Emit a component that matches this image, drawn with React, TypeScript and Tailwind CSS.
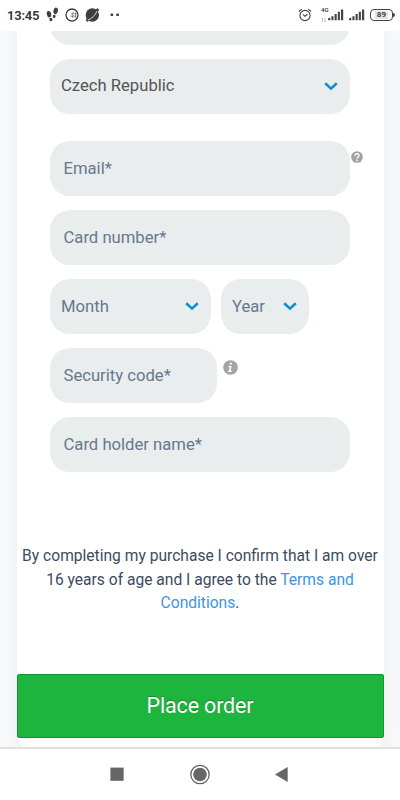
import type { ReactNode } from 'react';
import clsx from 'clsx';

function Chevron() {
    return (
        <svg width="14" height="9" viewBox="0 0 14 9" className="shrink-0" fill="none">
            <path d="M1.2 1.3 7 6.6l5.8-5.3" stroke="#0790d2" strokeWidth="2.6" />
        </svg>
    );
}

function Select({ value, className }: { value: string; className?: string }) {
    return (
        <button
            className={clsx(
                'flex h-[55px] items-center justify-between rounded-[20px] bg-[#e9eded] pr-[12.5px] pl-[11px] text-left',
                className
            )}>
            <span className="pt-px">{value}</span>
            <Chevron />
        </button>
    );
}

function Input({ label, className }: { label: string; className?: string }) {
    return (
        <input
            aria-label={label}
            placeholder={label}
            className={clsx(
                'block h-[55px] rounded-[20px] bg-[#e9eded] px-[13.5px] outline-none placeholder:text-[#68788f]',
                className
            )}
        />
    );
}

function Hint({ children, className }: { children: ReactNode; className?: string }) {
    return (
        <svg viewBox="0 0 16 16" className={clsx('shrink-0', className)}>
            <circle cx="8" cy="8" r="7.8" fill="#a3a3a3" />
            {children}
        </svg>
    );
}

function Signal() {
    return (
        <svg width="16" height="12" viewBox="0 0 16 12" fill="#444">
            <path d="M0 9.4 2.3 8.4V11.2H0zM3.4 7.3h2.1v3.9H3.4zM6.6 5.1h2.1v6.1H6.6zM9.8 2.8h2.1v8.4H9.8zM13 .4h2.2v10.8H13z" />
        </svg>
    );
}

function StatusBar() {
    return (
        <header className="flex h-[31px] shrink-0 items-center bg-white pr-[5px] pb-px pl-[7px] text-[#333]">
            <span className="w-[38px] text-[13px] leading-none font-semibold tracking-[-0.2px] whitespace-nowrap">
                13:45
            </span>
            <svg width="80" height="18" viewBox="0 0 80 18" fill="#3f3f3f">
                <ellipse cx="4" cy="8.2" rx="2.2" ry="3.2" transform="rotate(-10 4 8.2)" />
                <ellipse cx="5.9" cy="13.5" rx="1.5" ry="1.8" transform="rotate(-15 5.9 13.5)" />
                <ellipse cx="10.7" cy="4.9" rx="2.2" ry="3.3" transform="rotate(10 10.7 4.9)" />
                <ellipse cx="9.2" cy="10.4" rx="1.4" ry="1.6" transform="rotate(15 9.2 10.4)" />
                <circle cx="27" cy="9" r="6" fill="none" stroke="#3f3f3f" strokeWidth="1.3" />
                <path
                    d="M28.2 5.8 27.4 12M31 5.8l-.8 6.2M25.8 7.8h6M25.4 10.2h6"
                    stroke="#555"
                    strokeWidth=".6"
                />
                <circle cx="47.3" cy="9" r="6.7" />
                <path d="M41.5 15 53.4 3" stroke="#3f3f3f" strokeWidth="2.6" />
                <path d="M42.8 14c4-1.2 7.400-4.600 9.200-8.800" fill="none" stroke="#fff" strokeWidth=".8" />
                <rect x="65.6" y="7.5" width="2.6" height="2.6" rx=".6" />
                <rect x="71.3" y="7.5" width="2.6" height="2.6" rx=".6" />
            </svg>
            <div className="ml-auto flex items-center">
                <svg width="14" height="14" viewBox="0 0 14 14" fill="none" stroke="#444" strokeWidth="1.1">
                    <circle cx="7" cy="7.5" r="5.1" />
                    <path d="M1 3.5 3.7 1.2M10.3 1.2 13 3.5M4.9 6.4 7 8.3l2.5-2" />
                </svg>
                <div className="ml-[9px] flex h-[16px] w-[8px] flex-col justify-between text-[6px] leading-none font-medium">
                    <span>4G</span>
                    <svg width="6" height="6" viewBox="0 0 6 6" fill="none" stroke="#aaa" strokeWidth=".7">
                        <path d="M1.5 5V1L.5 2M4 1v4l1-1" />
                    </svg>
                </div>
                <div className="-ml-px">
                    <Signal />
                </div>
                <div className="ml-[5px]">
                    <Signal />
                </div>
                <div className="ml-[5px] flex h-[12px] w-[23px] items-center justify-center rounded-[4px] border-[1.5px] border-[#444]">
                    <span className="bg-[#e5e5e5] px-[2px] text-[8px] leading-[8px] font-semibold tracking-[0.3px]">
                        89
                    </span>
                </div>
                <span className="h-1 w-[2px] rounded-r-sm bg-[#444]" />
            </div>
        </header>
    );
}

function NavBar() {
    return (
        <nav className="z-10 flex h-[53px] shrink-0 justify-center border-t-2 border-[#e0e0e0] bg-white">
            <svg width="200" height="50" viewBox="0 0 200 50" fill="#666">
                <rect x="10.4" y="18.6" width="13.2" height="13.2" />
                <circle cx="100" cy="25.5" r="9.2" fill="none" stroke="#666" strokeWidth="1.3" />
                <circle cx="100" cy="25.5" r="6.8" />
                <path d="M175 25.5 187.7 18v15z" />
            </svg>
        </nav>
    );
}

export default function App() {
    return (
        <div
            className="flex h-[800px] w-[400px] flex-col overflow-hidden bg-white text-[16.65px] text-[#68788f]"
            style={{ fontFamily: 'Roboto, "Liberation Sans", sans-serif' }}>
            <StatusBar />
            <div className="flex min-h-0 grow flex-col overflow-hidden bg-[#f7f8fa] px-[16.5px]">
                <main className="-mb-[6px] flex grow flex-col rounded-b-[20px] bg-white shadow-[0_0_14px_rgba(60,80,100,0.07)]">
                    <form className="flex flex-col px-[33.5px]">
                        <div className="h-[14px] overflow-hidden">
                            <div className="-mt-[41px] h-[55px] rounded-[20px] bg-[#e9eded]" />
                        </div>
                        <Select value="Czech Republic" className="mt-[13.5px] w-full text-[#555]" />
                        <div className="mt-[27.5px] -mr-4 flex items-start">
                            <Input label="Email*" className="w-[300px]" />
                            <Hint className="mt-[10px] ml-[1px] size-[12px]">
                                <path
                                    d="M5.4 6.2C5.5 2.9 10.8 3 10.7 6c0 2-2.6 2-2.6 4M8.1 11.2v2"
                                    fill="none"
                                    stroke="#fff"
                                    strokeWidth="1.9"
                                />
                            </Hint>
                        </div>
                        <Input label="Card number*" className="mt-3.5 w-full" />
                        <div className="mt-3.5 flex gap-2.5">
                            <Select value="Month" className="w-[161px]" />
                            <Select value="Year" className="w-[88px]" />
                        </div>
                        <div className="mt-3.5 flex items-start">
                            <Input label="Security code*" className="w-[166.5px]" />
                            <Hint className="mt-[12px] ml-[6px] size-[15px]">
                                <path
                                    d="M7.4 2.8h2.4l-.5 2.1H6.9zM5.8 6.4h3.4l-1.1 5h1.3l-.3 1.3H5.3l.4-1.3h.7l.8-3.7H5.5z"
                                    fill="#fff"
                                />
                            </Hint>
                        </div>
                        <Input label="Card holder name*" className="mt-3.5 w-full" />
                    </form>
                    <p className="mt-[73px] text-center text-[15.6px] leading-[23.5px] whitespace-nowrap text-[#3e4a60]">
                        By completing my purchase I confirm that I am over
                        <br />
                        16 years of age and I agree to the{' '}
                        <a className="text-[#3c96e5]">
                            Terms and
                            <br />
                            Conditions
                        </a>
                        .
                    </p>
                    <button className="mt-[58.5px] h-[64px] w-full rounded-[2px] border border-[#159232] bg-[#1eb53f] text-[21.5px] tracking-[-0.15px] text-white [text-shadow:0_-1px_1px_rgba(0,0,0,0.25)]">
                        Place order
                    </button>
                </main>
            </div>
            <NavBar />
        </div>
    );
}
